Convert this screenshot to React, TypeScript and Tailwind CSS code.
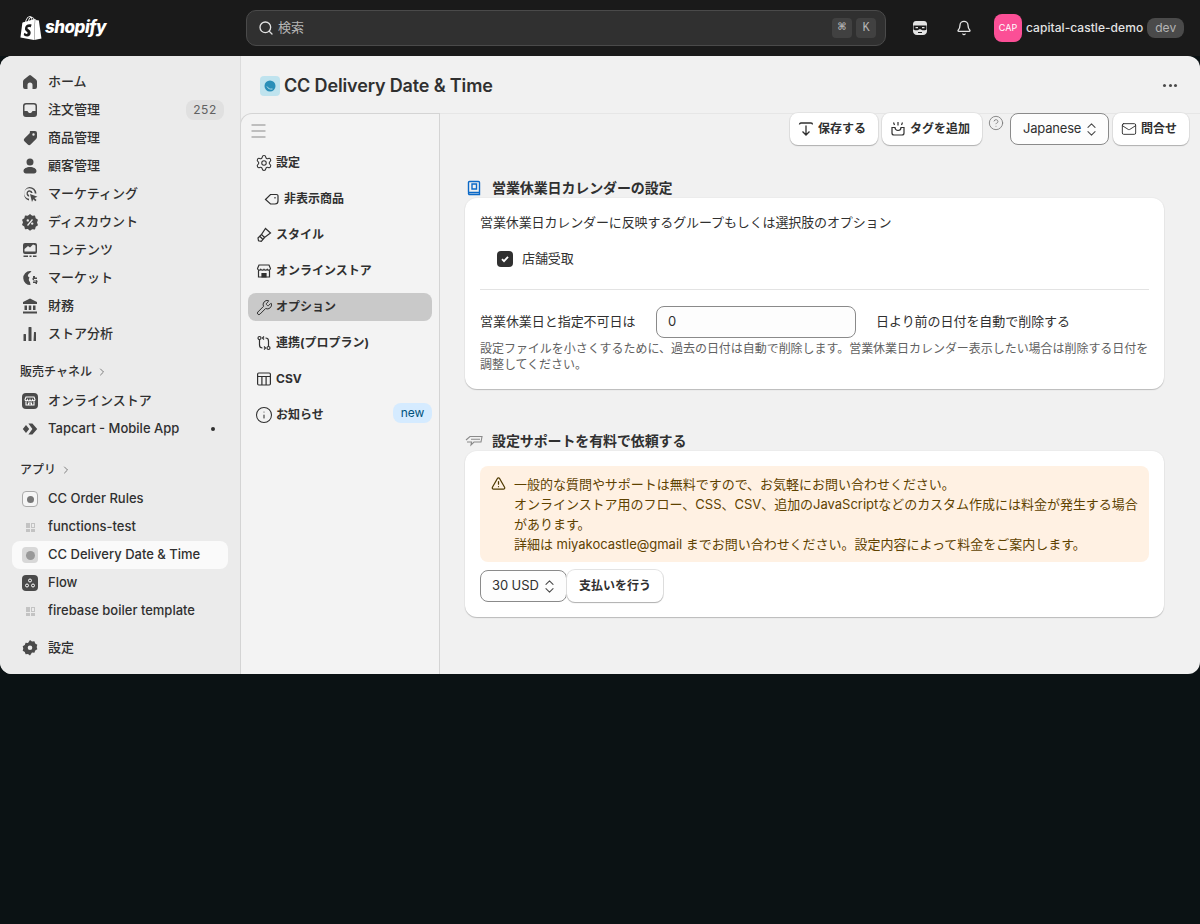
import type { ReactNode } from "react";
import { SiShopify } from "react-icons/si";
import { Bell, ChevronRight, ChevronsUpDown, CircleHelp, Info, Mail, Search, Settings, TriangleAlert, Wrench } from "lucide-react";

const font = "font-['Inter','Noto_Sans_CJK_JP',sans-serif]";

function Solid({ d }: { d: string }) {
  return (
    <svg viewBox="0 0 20 20" className="h-5 w-5 fill-[#4a4a4a]">
      <path fillRule="evenodd" d={d} />
    </svg>
  );
}

const homeIcon = "M9 3.400a1.600 1.600 0 0 1 2 0l5 4.200c.6.5 1 1.200 1 2v5.400a2 2 0 0 1-2 2h-2.500v-4a2.500 2.500 0 0 0-5 0v4H5a2 2 0 0 1-2-2V9.600c0-.8.4-1.500 1-2z";
const inboxIcon = "M6 3h8a3 3 0 0 1 3 3v8a3 3 0 0 1-3 3H6a3 3 0 0 1-3-3V6a3 3 0 0 1 3-3m0 1.500A1.500 1.500 0 0 0 4.500 6v5H7c.6 0 1 .4 1.200.9.2.7 1 1.100 1.800 1.100s1.600-.4 1.800-1.100c.2-.5.6-.9 1.200-.9h2.500V6A1.500 1.500 0 0 0 14 4.500z";
const tagIcon = "M11 3h4a2 2 0 0 1 2 2v4c0 .8-.3 1.500-.9 2.100l-5.500 5.500a2 2 0 0 1-2.800 0l-3.400-3.400a2 2 0 0 1 0-2.800l5.500-5.500C9.500 3.300 10.200 3 11 3m2.500 2.300a1.200 1.200 0 1 0 0 2.400 1.200 1.200 0 0 0 0-2.400";
const personIcon = "M10 2.500a3.500 3.500 0 1 1 0 7 3.500 3.500 0 0 1 0-7M10 11c3.500 0 6.500 1.600 6.500 4 0 1.400-1 2.500-2.500 2.500H6c-1.500 0-2.500-1.100-2.500-2.500 0-2.400 3-4 6.500-4";
const targetIcon = "M9.500 3a7 7 0 0 1 7 6.500h-1.700A5.300 5.300 0 1 0 9 14.800v1.700A7 7 0 0 1 9.500 3m0 3.200a3.300 3.300 0 0 1 3.200 2.700h-1.800a1.600 1.600 0 1 0-1.800 2v1.800a3.300 3.300 0 0 1 .4-6.500m.5 3.800 7.500 2.700-3 1.300 2 2-1.200 1.200-2-2-1.300 2.800z";
const discountIcon = "m10 2 2.200 1.700 2.800-.2.700 2.700 2.300 1.600-1 2.700 1 2.700-2.300 1.600-.7 2.700-2.800-.2L10 18.800l-2.200-1.700-2.800.2-.7-2.700L2 13l1-2.700L2 7.800l2.300-1.600.7-2.700 2.800.2zM7 13l1 1 5-6-1-1zm.8-5.800a1.200 1.200 0 1 0 0 2.400 1.200 1.200 0 0 0 0-2.400m4.400 3.200a1.200 1.200 0 1 0 0 2.400 1.200 1.200 0 0 0 0-2.400";
const contentIcon = "M5 3h10a2 2 0 0 1 2 2v7a2 2 0 0 1-2 2H5a2 2 0 0 1-2-2V5a2 2 0 0 1 2-2m-.5 8.500h11V5.500l-2.500-1-3 3-2-1.500-3.500 3zM3.500 15.500H8V17H3.500zm6 0h2V17h-2zm3.500 0h3.500V17H13z";
const globeIcon = "M10 3a7 7 0 0 1 1.500.2C10 5 8.500 5.500 8 7c-.5 1.300.5 2 1.500 2.500-1 1.500-1 3 .5 4.500l.5 3A7 7 0 1 1 10 3m5 5v1.500h2V11h-3v1h2a1.500 1.500 0 0 1 1 2.700V16h-1.500v-1H13v-1.500h3v-1h-2a1.500 1.500 0 0 1-1-2.700V8z";
const bankIcon = "M10 2.500 17 6v2H3V6zM4.500 9.500H7V14H4.500zm4.250 0h2.500V14h-2.500zm4.250 0h2.500V14H13zM3 15.500h14V17.500H3z";
const chartIcon = "M9 3h2a.5.5 0 0 1 .5.500V17H8.500V3.500A.5.5 0 0 1 9 3m5 5h1.500a.5.5 0 0 1 .5.500V17h-2.500zM4 10h1.500a.5.5 0 0 1 .5.500V17H3.500v-6.500A.5.5 0 0 1 4 10";
const gearIcon = "m10 2 2 1.400 2.400-.2.800 2.300 2.100 1.200-.6 2.300.6 2.300-2.100 1.200-.8 2.300-2.400-.2L10 17.500l-2-1.400-2.400.2-.8-2.300-2.100-1.200.6-2.300-.6-2.300 2.100-1.200.8-2.300 2.400.2zm0 5.500a2.300 2.300 0 1 0 0 4.600 2.300 2.300 0 0 0 0-4.600";

function NavRow({ icon, label, right, active }: { icon: ReactNode; label: string; right?: ReactNode; active?: boolean }) {
  return (
    <div className={`mx-3 flex h-7 items-center gap-2 rounded-lg pl-2 pr-1 text-[13px] font-medium text-[#303030] ${active ? "bg-[#fafafa]" : ""}`}>
      <span className="flex h-5 w-5 shrink-0 items-center justify-center">{icon}</span>
      <span className="flex-1 truncate">{label}</span>
      {right}
    </div>
  );
}

function GroupLabel({ label, className }: { label: string; className: string }) {
  return (
    <div className={`flex items-center gap-1 pl-5 text-xs font-medium text-[#303030] ${className}`}>
      {label}
      <ChevronRight size={12} strokeWidth={1.6} className="text-[#616161]" />
    </div>
  );
}

function AppIcon() {
  return (
    <span className="grid h-[9px] w-[9px] grid-cols-2 gap-px opacity-40">
      <i className="bg-[#888]" />
      <i className="border border-[#888]" />
      <i className="bg-[#888]" />
      <i className="bg-[#888]" />
    </span>
  );
}

function Sidebar() {
  return (
    <aside className="flex w-[240px] shrink-0 flex-col bg-[#ebebeb] pt-3">
      <NavRow icon={<Solid d={homeIcon} />} label="ホーム" />
      <NavRow
        icon={<Solid d={inboxIcon} />}
        label="注文管理"
        right={<span className="flex h-5 w-[38px] items-center justify-center rounded-lg bg-[#e0e0e0] text-xs font-normal tracking-wider text-[#616161]">252</span>}
      />
      <NavRow icon={<Solid d={tagIcon} />} label="商品管理" />
      <NavRow icon={<Solid d={personIcon} />} label="顧客管理" />
      <NavRow icon={<Solid d={targetIcon} />} label="マーケティング" />
      <NavRow icon={<Solid d={discountIcon} />} label="ディスカウント" />
      <NavRow icon={<Solid d={contentIcon} />} label="コンテンツ" />
      <NavRow icon={<Solid d={globeIcon} />} label="マーケット" />
      <NavRow icon={<Solid d={bankIcon} />} label="財務" />
      <NavRow icon={<Solid d={chartIcon} />} label="ストア分析" />
      <GroupLabel label="販売チャネル" className="mt-4 h-[16px]" />
      <div className="mt-[7px]">
        <NavRow
          icon={
            <span className="flex h-4 w-4 items-center justify-center rounded bg-[#4a4a4a]">
              <svg viewBox="0 0 12 12" className="h-3 w-3 fill-none stroke-white" strokeWidth="1.100">
                <path d="M2 2h8l1 2.500a1.300 1.300 0 0 1-2.500.5 1.300 1.300 0 0 1-2.500 0 1.300 1.300 0 0 1-2.500 0A1.300 1.300 0 0 1 1 4.500zM2 6.500V10h8V6.500M4.500 10V8h3v2" />
              </svg>
            </span>
          }
          label="オンラインストア"
        />
        <NavRow
          icon={
            <svg viewBox="0 0 20 20" className="h-4 w-4 fill-[#4a4a4a]">
              <path d="M8 3h5l6 7-6 7H8l5-7zM5 5l4 5-4 5-4-5z" />
            </svg>
          }
          label="Tapcart - Mobile App"
          right={<span className="mr-[9px] h-1 w-1 rounded-full bg-[#303030]" />}
        />
      </div>
      <GroupLabel label="アプリ" className="mt-[19px] h-[16px]" />
      <div className="mt-[7px]">
        <NavRow
          icon={
            <span className="flex h-4 w-4 items-center justify-center rounded-sm border border-[#aaa] bg-[#f5f5f5]">
              <span className="h-[7px] w-[7px] rounded-sm bg-[#777]" />
            </span>
          }
          label="CC Order Rules"
        />
        <NavRow icon={<AppIcon />} label="functions-test" />
        <NavRow
          active
          icon={
            <span className="flex h-4 w-4 items-center justify-center rounded-sm bg-[#d8d8d8]">
              <span className="h-[9px] w-[9px] rounded-full bg-[#999]" />
            </span>
          }
          label="CC Delivery Date & Time"
        />
        <NavRow
          icon={
            <span className="flex h-4 w-4 items-center justify-center rounded bg-[#4a4a4a]">
              <svg viewBox="0 0 12 12" className="h-3 w-3 fill-none stroke-white">
                <circle cx="6" cy="3.500" r="1.500" />
                <circle cx="3" cy="8.500" r="1.500" />
                <circle cx="9" cy="8.500" r="1.500" />
              </svg>
            </span>
          }
          label="Flow"
        />
        <NavRow icon={<AppIcon />} label="firebase boiler template" />
      </div>
      <div className="mt-[9px]">
        <NavRow icon={<Solid d={gearIcon} />} label="設定" />
      </div>
    </aside>
  );
}

function AppNavRow({ icon, label, active, right, indent }: { icon: ReactNode; label: string; active?: boolean; right?: ReactNode; indent?: boolean }) {
  return (
    <div className={`flex h-7 items-center gap-1 rounded-lg text-xs font-bold text-[#303030] ${indent ? "pl-4" : "pl-2"} ${active ? "bg-[#c9c9c9]" : ""}`}>
      <span className="flex h-4 w-4 shrink-0 items-center justify-center">{icon}</span>
      <span className="flex-1">{label}</span>
      {right}
    </div>
  );
}

function AppNav() {
  const ic = "h-[18px] w-[18px] shrink-0 text-[#303030]";
  const line = "h-4 w-4 shrink-0 fill-none stroke-[#303030]";
  return (
    <nav className="flex w-[200px] shrink-0 flex-col rounded-tl-xl border-l border-r border-t border-[#d4d4d4] bg-[#f3f3f3] px-[7px] pt-[10px]">
      <svg viewBox="0 0 15 14" className="ml-[3px] h-3.5 w-[15px] stroke-[#8a8a8a]" strokeWidth="1.200">
        <path d="M0.500 1h14M0.500 7h14M0.500 13h14" />
      </svg>
      <div className="mt-[11px] flex flex-col gap-2">
        <AppNavRow icon={<Settings className={ic} strokeWidth={1.4} />} label="設定" />
        <AppNavRow
          indent
          icon={
            <svg viewBox="0 0 16 16" className={line} strokeWidth="1.200">
              <path d="M1.500 8.500 6.500 3.500h6a1.500 1.500 0 0 1 1.500 1.500v5c0 2-1 3-3 3H6.500z" />
              <path d="M11 6v1.500" />
            </svg>
          }
          label="非表示商品"
        />
        <AppNavRow
          icon={
            <svg viewBox="0 0 16 16" className={line} strokeWidth="1.200">
              <path d="M9.500 1.500 14.500 6 8.500 10.500 5.500 7.500zM5.500 7.500 2 11l.5 2.800 2.800.5L8.500 10.500M4 9.500l2.500 2.500" />
            </svg>
          }
          label="スタイル"
        />
        <AppNavRow
          icon={
            <svg viewBox="0 0 16 16" className={line} strokeWidth="1.200">
              <path d="M3 2h10l1.500 3.500a1.800 1.800 0 0 1-3.300.8 2 2 0 0 1-3.200 0 2 2 0 0 1-3.200 0A1.800 1.800 0 0 1 1.500 5.500zM2.500 7.500V14h11V7.500" />
              <path d="M6 14v-3.500h4V14z" className="fill-[#303030]" />
            </svg>
          }
          label="オンラインストア"
        />
        <AppNavRow active icon={<Wrench className="h-[17px] w-[17px] shrink-0 text-[#303030]" strokeWidth={1.4} />} label="オプション" />
        <AppNavRow
          icon={
            <svg viewBox="0 0 16 16" className={line} strokeWidth="1.200">
              <circle cx="3.500" cy="3" r="1.500" />
              <circle cx="12.500" cy="13" r="1.500" />
              <path d="M3.500 4.500V10c0 2 1 3 3 3M12.500 11.500V6c0-2-1-3-3-3M8 1.500 6.500 3 8 4.500M8 11.500 9.500 13 8 14.500" />
            </svg>
          }
          label="連携(プロプラン)"
        />
        <AppNavRow
          icon={
            <svg viewBox="0 0 16 16" className={line} strokeWidth="1.200">
              <rect x="1.600" y="2" width="12.800" height="12" rx="1.200" />
              <path d="M1.600 5.500h12.800M5.900 5.500V14M10.100 5.500V14" />
            </svg>
          }
          label="CSV"
        />
        <AppNavRow
          icon={<Info className={ic} strokeWidth={1.4} />}
          label="お知らせ"
          right={<span className="-mt-1 flex h-5 w-[39px] items-center justify-center rounded-lg bg-[#d5ebff] text-xs font-normal text-[#00527c]">new</span>}
        />
      </div>
    </nav>
  );
}

const btn = "flex h-8 items-center rounded-lg bg-white pr-3 text-xs font-bold text-[#303030] shadow-[0_1px_1px_#b0b0b0,0_0_0_1px_#e3e3e3]";

function Btn({ icon, label }: { icon: ReactNode; label: string }) {
  return (
    <button className={`${btn} gap-1 pl-2`}>
      <span className="flex h-4 w-4 items-center justify-center">{icon}</span>
      {label}
    </button>
  );
}

function SelectBox({ label, className }: { label: string; className: string }) {
  return (
    <div className={`flex h-8 items-center justify-between rounded-lg border border-[#8a8a8a] bg-[#fdfdfd] pr-2 text-[13px] text-[#303030] ${className}`}>
      {label}
      <ChevronsUpDown size={17} strokeWidth={1.5} className="text-[#4a4a4a]" />
    </div>
  );
}

function Toolbar() {
  return (
    <div className="-mt-px flex items-start justify-end gap-1 pr-[11px]">
      <Btn
        label="保存する"
        icon={
          <svg viewBox="0 0 16 16" className="h-4 w-4 fill-none stroke-[#303030]" strokeWidth="1.300">
            <path d="M1.500 3.500c0-1 .5-1.500 1.500-1.500h10c1 0 1.500.5 1.500 1.500M8 4.500V14M4.500 10.500 8 14l3.500-3.500" />
          </svg>
        }
      />
      <Btn
        label="タグを追加"
        icon={
          <svg viewBox="0 0 16 16" className="h-4 w-4 fill-none stroke-[#303030]" strokeWidth="1.200">
            <path d="M2 6.500V12a2 2 0 0 0 2 2h8a2 2 0 0 0 2-2V6.500H11a3 3 0 0 1-6 0zM3.500 1.500 4.500 4M8 1v3.500M12.500 1.500 11.500 4" />
          </svg>
        }
      />
      <CircleHelp size={16} strokeWidth={1.3} className="mx-[2px] mt-[2px] text-[#7a7a7a]" />
      <SelectBox label="Japanese" className="w-[99px] pl-3 tracking-[-0.2px]" />
      <Btn label="問合せ" icon={<Mail size={16} strokeWidth={1.4} className="text-[#303030]" />} />
    </div>
  );
}

function Section({ icon, title, pad, children }: { icon: ReactNode; title: string; pad: string; children: ReactNode }) {
  return (
    <section className="ml-[25px] mr-9">
      <div className="flex h-[21px] items-center gap-[11px] pl-px text-sm font-semibold tracking-[-0.12px] text-[#303030]">
        <span className="flex h-4 w-[15px] items-center justify-center">{icon}</span>
        {title}
      </div>
      <div className={`rounded-xl bg-white shadow-[0_1px_1px_#bbb,0_0_0_1px_#ececec] ${pad}`}>{children}</div>
    </section>
  );
}

function Content() {
  return (
    <div className="flex-1 border-t border-[#e6e6e6]">
      <Toolbar />
      <div className="mt-8">
        <Section
          title="営業休業日カレンダーの設定"
          pad="px-[15px] pt-[15px] pb-4"
          icon={
            <svg viewBox="0 0 14 16" className="h-4 w-3.5 fill-none stroke-[#0b69c7]" strokeWidth="1.400">
              <path d="M1.500 12.500V2.500a1 1 0 0 1 1-1h9a1 1 0 0 1 1 1v12h-10a1 1 0 0 1-1-1 1 1 0 0 1 1-1h10" />
              <path d="M5 4h4.500v5H5z" />
            </svg>
          }
        >
          <p className="-mt-px text-[13px] leading-5 tracking-[-0.12px] text-[#303030]">営業休業日カレンダーに反映するグループもしくは選択肢のオプション</p>
          <label className="mt-[17px] flex h-5 items-center gap-[9px] pl-[17px] text-[13px] tracking-[-0.12px] text-[#303030]">
            <span className="flex h-4 w-4 items-center justify-center rounded bg-[#303030]">
              <svg viewBox="0 0 12 12" className="h-3 w-3 fill-none stroke-white" strokeWidth="1.800">
                <path d="M3 6.200 5 8.200 9 3.800" />
              </svg>
            </span>
            店舗受取
          </label>
          <hr className="mt-5 border-[#e3e3e3]" />
          <div className="mt-4 flex items-center text-[13px] tracking-[-0.05px] text-[#303030]">
            <span className="w-[176px]">営業休業日と指定不可日は</span>
            <span className="flex h-8 w-[200px] items-center rounded-lg border border-[#8a8a8a] bg-[#fdfdfd] px-[11px]">0</span>
            <span className="ml-5">日より前の日付を自動で削除する</span>
          </div>
          <p className="mt-[3px] text-xs leading-4 tracking-[-0.04px] text-[#616161]">
            設定ファイルを小さくするために、過去の日付は自動で削除します。営業休業日カレンダー表示したい場合は削除する日付を調整してください。
          </p>
        </Section>
        <div className="mt-[41px]">
          <Section
            title="設定サポートを有料で依頼する"
            pad="p-[15px]"
            icon={
              <svg viewBox="0 0 18 14" className="h-3.5 w-[18px] shrink-0 fill-none stroke-[#8a8a8a]" strokeWidth="1.100">
                <path d="M1 6 5 2.500h12l-1 5.500H9L6 11l.5-3H2M6 5.200h9" />
              </svg>
            }
          >
            <div className="flex gap-2 rounded-lg bg-[#fff1e3] py-2 pl-[11px] pr-2 text-[13px] leading-5 tracking-[-0.02px] text-[#5e4200]">
              <TriangleAlert size={15} strokeWidth={2} className="mt-[2px] shrink-0 text-[#4f3a00]" />
              <div>
                一般的な質問やサポートは無料ですので、お気軽にお問い合わせください。
                <br />
                オンラインストア用のフロー、CSS、CSV、追加のJavaScriptなどのカスタム作成には料金が発生する場合があります。
                <br />
                詳細は miyakocastle@gmail までお問い合わせください。設定内容によって料金をご案内します。
              </div>
            </div>
            <div className="mt-2 flex">
              <SelectBox label="30 USD" className="w-[87px] pl-[11px] tracking-[-0.1px]" />
              <button className={`${btn} pl-3`}>支払いを行う</button>
            </div>
          </Section>
        </div>
      </div>
    </div>
  );
}

export default function App() {
  return (
    <div className={`flex h-[924px] flex-col overflow-hidden bg-[#0b1214] ${font}`}>
      <header className="flex h-14 shrink-0 items-center bg-[#1a1a1a] text-white">
        <div className="flex w-[246px] items-center pl-[19px]">
          <SiShopify size={24} />
          <span className="ml-[2px] text-[17px] font-extrabold italic tracking-[-0.5px]">shopify</span>
        </div>
        <div className="flex h-9 w-[640px] items-center rounded-[10px] border border-[#4a4a4a] bg-[#303030] pl-[11px] pr-[9px] text-[13px] text-[#b5b5b5]">
          <Search size={16} strokeWidth={2} className="text-[#e3e3e3]" />
          <span className="ml-1 flex-1">検索</span>
          <kbd className="flex h-5 w-5 items-center justify-center rounded bg-[#414141] text-[13px] font-bold">⌘</kbd>
          <kbd className="ml-1 flex h-5 w-5 items-center justify-center rounded bg-[#414141] text-xs">K</kbd>
        </div>
        <span className="ml-[26px] flex h-4 w-4 items-center justify-center">
          <svg viewBox="0 0 16 16" className="h-4 w-4">
            <path fill="#e3e3e3" d="M4 1h8c2 0 3 1.500 3 3v7c0 2-1.500 4-4 4H5c-2.500 0-4-2-4-4V4c0-1.500 1-3 3-3" />
            <path fill="#1a1a1a" d="M1.500 5.500h13v3.500c0 .8-.7 1.200-1.500 1.200h-2.500L8 9l-2.500 1.200H3c-.8 0-1.500-.4-1.500-1.200zM6 12h4v1H6z" />
            <path fill="#e3e3e3" d="M3.500 7h2.500v1.300H3.500zm6.500 0h2.500v1.300H10z" />
          </svg>
        </span>
        <Bell size={16} strokeWidth={2} className="ml-[28px] text-[#e3e3e3]" />
        <span className="ml-[22px] flex h-7 w-7 items-center justify-center rounded-lg bg-[#fb4f96] text-[9px] font-normal">CAP</span>
        <span className="ml-1 text-xs font-medium tracking-[0.05px] text-[#e3e3e3]">capital-castle-demo</span>
        <span className="ml-1 flex h-5 w-[37px] items-center justify-center rounded-lg bg-[#4a4a4a] text-xs text-[#b5b5b5]">dev</span>
      </header>
      <div className="flex h-[618px] shrink-0 overflow-hidden rounded-xl bg-[#f1f1f1]">
        <Sidebar />
        <main className="flex min-w-0 flex-1 flex-col border-l border-[#dcdcdc]">
          <div className="-ml-px flex h-[57px] shrink-0 items-center pl-5 pr-[23px] pt-[2px]">
            <span className="flex h-5 w-5 items-center justify-center rounded-sm bg-[#bfe3ee]">
              <svg viewBox="0 0 12 12" className="h-3 w-3">
                <circle cx="6" cy="6" r="5.500" fill="#2a8fb8" />
                <path d="M3 6.500c1 2 3 3 5.500 2.500" fill="none" stroke="#bfe3ee" strokeWidth="0.900" />
              </svg>
            </span>
            <h1 className="ml-1 flex-1 text-lg font-semibold tracking-[-0.15px] text-[#303030]">CC Delivery Date & Time</h1>
            <span className="flex gap-[2.500px]">
              <i className="h-[3px] w-[3px] rounded-full bg-[#4a4a4a]" />
              <i className="h-[3px] w-[3px] rounded-full bg-[#4a4a4a]" />
              <i className="h-[3px] w-[3px] rounded-full bg-[#4a4a4a]" />
            </span>
          </div>
          <div className="-ml-px flex min-h-0 flex-1">
            <AppNav />
            <Content />
          </div>
        </main>
      </div>
    </div>
  );
}
